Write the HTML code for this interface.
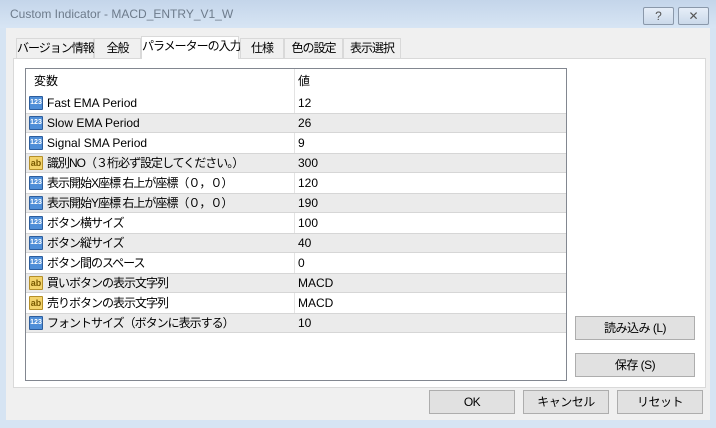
<!DOCTYPE html><html><head><meta charset="utf-8"><style>
*{margin:0;padding:0;box-sizing:border-box}
body{width:716px;height:428px;overflow:hidden;background:#d6e4f3;font-family:"Liberation Sans","Noto Sans CJK JP",sans-serif;font-size:12px;color:#000;position:relative}
.title{position:absolute;left:0;top:0;width:716px;height:28px;background:linear-gradient(#c4d5ea,#d7e5f4)}
.title span{position:absolute;left:10px;top:7px;color:#6d7b8b;font-size:12px}
.tb{position:absolute;top:7px;width:31px;height:18px;border:1px solid #8a98aa;border-radius:2px;background:linear-gradient(#e6eef8,#cbd9ea);text-align:center;font-size:12px;line-height:16px;color:#555}
.body{position:absolute;left:6px;top:28px;width:704px;height:392px;background:#f0f0f0}
.tab{position:absolute;top:38px;height:20px;border:1px solid #d9d9d9;border-bottom:none;background:#f0f0f0;font-size:12px;line-height:18px;text-align:center;white-space:nowrap;letter-spacing:-1px}
.panel{position:absolute;left:13px;top:58px;width:693px;height:330px;background:#fff;border:1px solid #d9d9d9}
.tbl{position:absolute;left:25px;top:68px;width:542px;height:313px;border:1px solid #828790;background:#fff}
.row{position:absolute;left:0;width:540px;height:20px;line-height:20px;white-space:nowrap}
.row.g{background:#ebebeb;border-top:1px solid #d6d6d6;border-bottom:1px solid #d6d6d6;line-height:18px}
.row .n{position:absolute;left:21px}
.row .j{letter-spacing:-1px}
.row .v{position:absolute;left:272px}
.ic{position:absolute;left:3px;top:3px;width:14px;height:14px;border-radius:1px;font-size:7px;line-height:12px;text-align:center;font-weight:bold;letter-spacing:0}
.g .ic{top:2px}
.i1{background:#4f8fd8;color:#fff;border:1px solid #2d5d9c}
.i2{background:#f3d36b;color:#7a5a00;border:1px solid #b48f2a;font-size:9px}
.div{position:absolute;left:268px;top:0;width:1px;height:264px;background:#e3e3e3}
.btn{position:absolute;height:24px;border:1px solid #adadad;background:#e1e1e1;text-align:center;line-height:22px;font-size:12px;letter-spacing:-0.5px}
</style></head><body>
<div class="title"><span>Custom Indicator - MACD_ENTRY_V1_W</span></div>
<div class="tb" style="left:643px">?</div><div class="tb" style="left:678px">✕</div>
<div class="body"></div>
<div class="panel"></div>
<div class="tab" style="left:16px;width:78px">バージョン情報</div>
<div class="tab" style="left:94px;width:47px">全般</div>
<div class="tab" style="left:141px;width:98px;top:36px;height:23px;background:#fff;border-color:#d9d9d9">パラメーターの入力</div>
<div class="tab" style="left:240px;width:44px">仕様</div>
<div class="tab" style="left:284px;width:59px">色の設定</div>
<div class="tab" style="left:343px;width:58px">表示選択</div>
<div class="tbl">
<div class="div"></div>
<div class="row" style="top:2px;height:22px"><span class="n" style="left:8px">変数</span><span class="v">値</span></div>
<div class="row" style="top:24px"><div class="ic i1">123</div><span class="n">Fast EMA Period</span><span class="v">12</span></div>
<div class="row g" style="top:44px"><div class="ic i1">123</div><span class="n">Slow EMA Period</span><span class="v">26</span></div>
<div class="row" style="top:64px"><div class="ic i1">123</div><span class="n">Signal SMA Period</span><span class="v">9</span></div>
<div class="row g" style="top:84px"><div class="ic i2">ab</div><span class="n j">識別NO（３桁必ず設定してください。）</span><span class="v">300</span></div>
<div class="row" style="top:104px"><div class="ic i1">123</div><span class="n j">表示開始X座標 右上が座標（０，０）</span><span class="v">120</span></div>
<div class="row g" style="top:124px"><div class="ic i1">123</div><span class="n j">表示開始Y座標 右上が座標（０，０）</span><span class="v">190</span></div>
<div class="row" style="top:144px"><div class="ic i1">123</div><span class="n j">ボタン横サイズ</span><span class="v">100</span></div>
<div class="row g" style="top:164px"><div class="ic i1">123</div><span class="n j">ボタン縦サイズ</span><span class="v">40</span></div>
<div class="row" style="top:184px"><div class="ic i1">123</div><span class="n j">ボタン間のスペース</span><span class="v">0</span></div>
<div class="row g" style="top:204px"><div class="ic i2">ab</div><span class="n j">買いボタンの表示文字列</span><span class="v">MACD</span></div>
<div class="row" style="top:224px"><div class="ic i2">ab</div><span class="n j">売りボタンの表示文字列</span><span class="v">MACD</span></div>
<div class="row g" style="top:244px"><div class="ic i1">123</div><span class="n j">フォントサイズ（ボタンに表示する）</span><span class="v">10</span></div>
</div>
<div class="btn" style="left:575px;top:316px;width:120px">読み込み (L)</div>
<div class="btn" style="left:575px;top:353px;width:120px">保存 (S)</div>
<div class="btn" style="left:429px;top:390px;width:86px">OK</div>
<div class="btn" style="left:523px;top:390px;width:86px">キャンセル</div>
<div class="btn" style="left:617px;top:390px;width:86px">リセット</div>
</body></html>
